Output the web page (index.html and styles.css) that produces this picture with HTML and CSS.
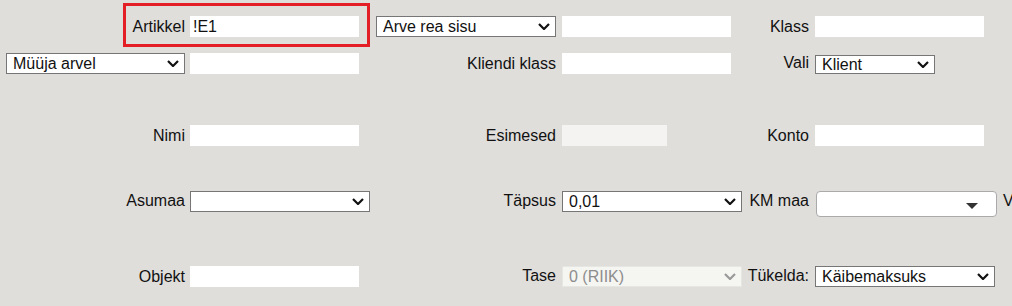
FILE: index.html
```html
<!DOCTYPE html>
<html lang="et">
  <head>
    <title>Arve read</title>
    <link rel="stylesheet" href="styles.css">
  </head>
  <body>
    <form class="filter_grid">
      <!-- rida 1 -->
      <div class="marked">
        <label class="lbl">Artikkel</label>
        <input class="txt" type="text" value="!E1">
      </div>
      <div class="cell_lbl r1">
        <span class="sel_box">
          <select class="sel sel_wide">
            <option>Arve rea sisu</option>
          </select>
          <svg class="chev" width="12" height="7" viewBox="0 0 12 7"><path d="M1 1l5 5 5-5"/></svg>
        </span>
      </div>
      <div class="cell r1"><input class="txt" type="text"></div>
      <div class="cell_lbl r1"><label class="lbl">Klass</label></div>
      <div class="cell r1"><input class="txt" type="text"></div>
      <div class="cell r1"></div>

      <!-- rida 2 -->
      <div class="cell_lbl first">
        <span class="sel_box">
          <select class="sel sel_seller">
            <option>Müüja arvel</option>
          </select>
          <svg class="chev" width="12" height="7" viewBox="0 0 12 7"><path d="M1 1l5 5 5-5"/></svg>
        </span>
      </div>
      <div class="cell"><input class="txt" type="text"></div>
      <div class="cell_lbl"><label class="lbl">Kliendi klass</label></div>
      <div class="cell"><input class="txt" type="text"></div>
      <div class="cell_lbl"><label class="lbl lbl_up">Vali</label></div>
      <div class="cell">
        <span class="sel_box small_box">
          <select class="sel sel_small">
            <option>Klient</option>
          </select>
          <svg class="chev" width="12" height="7" viewBox="0 0 12 7"><path d="M1 1l5 5 5-5"/></svg>
        </span>
      </div>
      <div class="cell"></div>

      <!-- rida 3 -->
      <div class="cell_lbl first"><label class="lbl">Nimi</label></div>
      <div class="cell"><input class="txt" type="text"></div>
      <div class="cell_lbl"><label class="lbl">Esimesed</label></div>
      <div class="cell"><input class="txt txt_ro" type="text" readonly></div>
      <div class="cell_lbl"><label class="lbl">Konto</label></div>
      <div class="cell"><input class="txt" type="text"></div>
      <div class="cell"></div>

      <!-- rida 4 -->
      <div class="cell_lbl first"><label class="lbl lbl_up">Asumaa</label></div>
      <div class="cell">
        <span class="sel_box">
          <select class="sel sel_wide">
            <option></option>
          </select>
          <svg class="chev" width="12" height="7" viewBox="0 0 12 7"><path d="M1 1l5 5 5-5"/></svg>
        </span>
      </div>
      <div class="cell_lbl"><label class="lbl lbl_up">Täpsus</label></div>
      <div class="cell">
        <span class="sel_box">
          <select class="sel sel_wide">
            <option>0,01</option>
          </select>
          <svg class="chev" width="12" height="7" viewBox="0 0 12 7"><path d="M1 1l5 5 5-5"/></svg>
        </span>
      </div>
      <div class="cell_lbl"><label class="lbl lbl_up">KM maa</label></div>
      <div class="cell">
        <div class="combo"><span class="combo_arrow"></span></div>
      </div>
      <div class="cell"><label class="lbl lbl_up lbl_tail">V</label></div>

      <!-- rida 5 -->
      <div class="cell_lbl first"><label class="lbl">Objekt</label></div>
      <div class="cell"><input class="txt" type="text"></div>
      <div class="cell_lbl"><label class="lbl lbl_up">Tase</label></div>
      <div class="cell">
        <span class="sel_box off_box">
          <select class="sel sel_wide sel_off" disabled>
            <option>0 (RIIK)</option>
          </select>
          <svg class="chev" width="12" height="7" viewBox="0 0 12 7"><path d="M1 1l5 5 5-5"/></svg>
        </span>
      </div>
      <div class="cell_lbl"><label class="lbl lbl_up">Tükelda:</label></div>
      <div class="cell">
        <span class="sel_box">
          <select class="sel sel_wide">
            <option>Käibemaksuks</option>
          </select>
          <svg class="chev" width="12" height="7" viewBox="0 0 12 7"><path d="M1 1l5 5 5-5"/></svg>
        </span>
      </div>
      <div class="cell"></div>
    </form>
  </body>
</html>
```

FILE: styles.css
```css
body {
  margin: 0;
  padding: 0;
  background-color: #e0dedb;
  font-family: "Liberation Sans", Arial, sans-serif;
  font-size: 16px;
  color: #111;
  overflow: hidden;
}

.filter_grid {
  display: grid;
  grid-template-columns: 190px 180px 192px 180px 73px 182px 1fr;
  grid-template-rows: 50px 72px 66px 75px 40px;
  padding-top: 3px;
  margin: 0;
}

.cell,
.cell_lbl {
  display: flex;
  align-items: flex-start;
}

.cell_lbl {
  justify-content: flex-end;
  padding-right: 6px;
}

.cell_lbl.first {
  padding-right: 5px;
}

.r1 {
  padding-top: 13px;
}

.lbl {
  line-height: 21px;
  white-space: nowrap;
}

.lbl_up {
  line-height: 19px;
}

.lbl_tail {
  margin-left: 6px;
}

/* punane raam artikli ymber */
.marked {
  grid-column: 1 / span 2;
  justify-self: end;
  width: 247px;
  height: 44px;
  box-sizing: border-box;
  border: 3px solid #e41e25;
  padding: 10px 8px 7px 0;
  display: flex;
  justify-content: flex-end;
  gap: 5px;
}

.txt {
  width: 169px;
  height: 21px;
  box-sizing: border-box;
  border: none;
  margin: 0;
  padding: 0 3px;
  background-color: #fff;
  font-family: inherit;
  font-size: 16px;
  color: #111;
  outline: none;
}

.txt_ro {
  width: 105px;
  background-color: #f4f3f1;
}

.sel_box {
  position: relative;
  display: inline-block;
  height: 21px;
}

.sel {
  -webkit-appearance: none;
  appearance: none;
  display: block;
  height: 21px;
  box-sizing: border-box;
  margin: 0;
  border: 1px solid #767676;
  border-radius: 0;
  background-color: #fff;
  font-family: inherit;
  font-size: 16px;
  line-height: 19px;
  color: #111;
  padding: 0 24px 0 6px;
}

.chev {
  position: absolute;
  right: 6px;
  top: 7px;
  pointer-events: none;
  fill: none;
  stroke: #111;
  stroke-width: 2.2;
}

.sel_wide {
  width: 180px;
}

.sel_seller {
  width: 179px;
}

.small_box {
  height: 19px;
  margin-top: 2px;
}

.small_box .chev {
  top: 6px;
}

.sel_small {
  width: 120px;
  height: 19px;
  line-height: 17px;
}

.sel_off {
  background-color: #f5f5f2;
  border-color: #e6e6e3;
  color: #8d8d8d;
  opacity: 1;
}

.off_box .chev {
  stroke: #9a9a9a;
}

.combo {
  position: relative;
  width: 181px;
  height: 26px;
  box-sizing: border-box;
  border: 1px solid #aaa;
  border-radius: 4px;
  background-color: #fff;
  margin-left: 1px;
}

.combo_arrow {
  position: absolute;
  right: 18px;
  top: 11px;
  width: 0;
  height: 0;
  border-left: 6px solid transparent;
  border-right: 6px solid transparent;
  border-top: 6px solid #333;
}
```
